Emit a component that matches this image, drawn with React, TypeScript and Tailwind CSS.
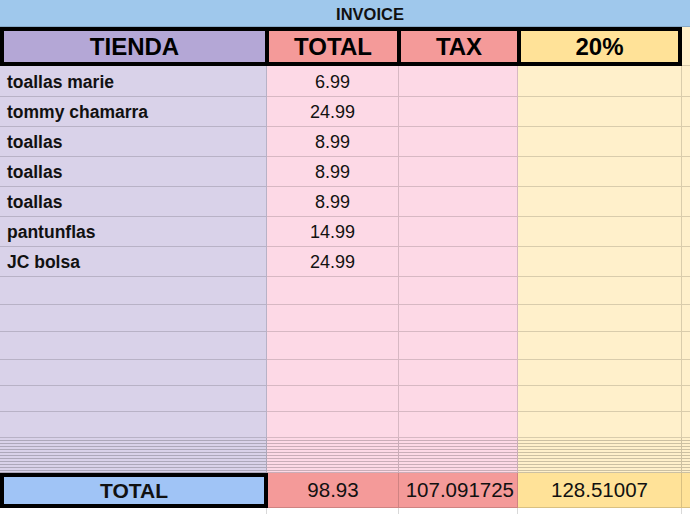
import React from 'react';

const items = [
  { name: 'toallas marie', total: '6.99', h: 'h-[31px]' },
  { name: 'tommy chamarra', total: '24.99', h: 'h-[30px]' },
  { name: 'toallas', total: '8.99', h: 'h-[30px]' },
  { name: 'toallas', total: '8.99', h: 'h-[30px]' },
  { name: 'toallas', total: '8.99', h: 'h-[30px]' },
  { name: 'pantunflas', total: '14.99', h: 'h-[30px]' },
  { name: 'JC bolsa', total: '24.99', h: 'h-[30px]' },
  { name: '', total: '', h: 'h-[28px]' },
  { name: '', total: '', h: 'h-[27px]' },
  { name: '', total: '', h: 'h-[28px]' },
  { name: '', total: '', h: 'h-[26px]' },
  { name: '', total: '', h: 'h-[26px]' },
  { name: '', total: '', h: 'h-[26px]' },
];

// collapsed rows just above the totals
const hidden = ['h-[3px]', 'h-[3px]', 'h-[3px]', 'h-[3px]', 'h-[3px]', 'h-[3px]', 'h-[3px]', 'h-[3px]', 'h-[3px]', 'h-[3px]', 'h-[3px]', 'h-[2px]'];

function Row({ name, total, h }: { name: string; total: string; h: string }) {
  return (
    <div className={`flex ${h}`}>
      <div className="w-[267px] shrink-0 bg-[#d9d2e9] border-r border-b border-black/15 flex items-center pl-[7px] pt-[2px] font-bold text-[17.5px] text-[#111]">
        {name}
      </div>
      <div className="w-[132px] shrink-0 bg-[#fdd9e6] border-r border-b border-black/15 flex items-center justify-center pt-[2px] text-[18px] text-[#111]">
        {total}
      </div>
      <div className="w-[119px] shrink-0 bg-[#fdd9e6] border-r border-b border-black/15" />
      <div className="w-[164px] shrink-0 bg-[#fff0cb] border-r border-b border-black/15" />
      <div className="flex-1 bg-[#fff0cb] border-b border-black/15" />
    </div>
  );
}

export default function App() {
  return (
    <div className="w-[690px] h-[514px] overflow-hidden bg-white font-['Liberation_Sans',Arial,sans-serif] text-black">
      <div className="h-[27px] bg-[#9fc8ec] border-b border-black/15 flex items-center justify-center pl-[50px] pt-[2px] font-bold text-[16.5px] text-[#111]">
        INVOICE
      </div>

      <div className="flex h-[39px]">
        <div className="flex bg-black p-[4px] gap-[4px] w-[682px] shrink-0">
          <div className="w-[261px] shrink-0 bg-[#b4a7d6] flex items-center justify-center font-bold text-[24px]">TIENDA</div>
          <div className="w-[128px] shrink-0 bg-[#f49a99] flex items-center justify-center font-bold text-[24px]">TOTAL</div>
          <div className="w-[116px] shrink-0 bg-[#f49a99] flex items-center justify-center font-bold text-[24px]">TAX</div>
          <div className="flex-1 bg-[#ffe298] flex items-center justify-center font-bold text-[24px]">20%</div>
        </div>
        <div className="flex-1 bg-[#fff0cb] border-b border-black/15" />
      </div>

      {items.map((it, i) => (
        <Row key={i} name={it.name} total={it.total} h={it.h} />
      ))}

      {hidden.map((h, i) => (
        <div key={i} className={`flex ${h}`}>
          <div className="w-[267px] shrink-0 bg-[#d9d2e9] border-r border-b border-black/20" />
          <div className="w-[132px] shrink-0 bg-[#fdd9e6] border-r border-b border-black/20" />
          <div className="w-[119px] shrink-0 bg-[#fdd9e6] border-r border-b border-black/20" />
          <div className="w-[164px] shrink-0 bg-[#fff0cb] border-r border-b border-black/20" />
          <div className="flex-1 bg-[#fff0cb] border-b border-black/20" />
        </div>
      ))}

      <div className="flex h-[35px]">
        <div className="w-[268px] shrink-0 bg-[#a0c4f6] border-4 border-black flex items-center justify-center font-bold text-[21px] text-[#111]">
          TOTAL
        </div>
        <div className="w-[131px] shrink-0 bg-[#f49a99] border-r border-b border-black/15 flex items-center justify-center text-[20.5px] text-[#111]">
          98.93
        </div>
        <div className="w-[119px] shrink-0 bg-[#f49a99] border-r border-b border-black/15 flex items-center justify-end pr-[3px] text-[20.5px] text-[#111]">
          107.091725
        </div>
        <div className="w-[164px] shrink-0 bg-[#ffe298] border-r border-b border-black/15 flex items-center justify-center text-[20.5px] text-[#111]">
          128.51007
        </div>
        <div className="flex-1 bg-[#ffe298] border-b border-black/15" />
      </div>

      <div className="flex h-[10px]">
        <div className="w-[267px] shrink-0 border-r border-black/15" />
        <div className="w-[132px] shrink-0 border-r border-black/15" />
        <div className="w-[119px] shrink-0 border-r border-black/15" />
        <div className="w-[164px] shrink-0 border-r border-black/15" />
        <div className="flex-1" />
      </div>
    </div>
  );
}
